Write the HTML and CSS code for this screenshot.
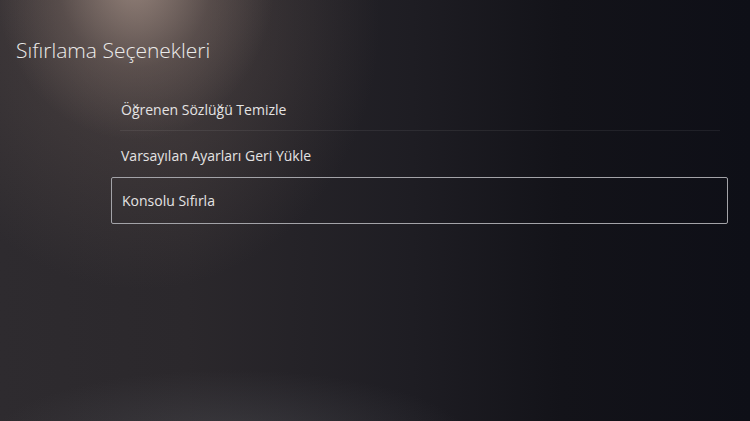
FILE: index.html
```html
<!DOCTYPE html>
<html lang="tr">
<head>
    <meta charset="UTF-8">
    <title>Sıfırlama Seçenekleri</title>
    <link rel="stylesheet" href="styles.css">
</head>
<body>
    <div class="screen">
        <h1 class="title">Sıfırlama Seçenekleri</h1>

        <ul class="menu">
            <li class="menu-item">Öğrenen Sözlüğü Temizle</li>
            <li class="menu-item">Varsayılan Ayarları Geri Yükle</li>
            <li class="menu-item focused">Konsolu Sıfırla</li>
        </ul>
    </div>
</body>
</html>
```

FILE: styles.css
```css
/* Settings screen, dark theme */
html, body { margin: 0; padding: 0; height: 100%; }
body { background: #111219; font-family: "Open Sans", "Noto Sans", sans-serif; color: #e6e4e4; overflow: hidden; }

.screen {
    width: 750px;
    height: 421px;
    box-sizing: border-box;
    padding: 35px 22px 0 16px;
    background:
        radial-gradient(ellipse 140px 160px at 135px -20px, rgba(165, 145, 135, 0.8), rgba(130, 112, 105, 0.35) 55%, rgba(90, 80, 80, 0) 100%),
        radial-gradient(ellipse 240px 270px at 140px 20px, rgba(100, 86, 82, 0.55), rgba(60, 55, 55, 0) 100%),
        radial-gradient(ellipse 240px 70px at 230px 440px, rgba(85, 86, 92, 0.4), rgba(60, 60, 66, 0) 100%),
        linear-gradient(90deg, #2e2b2f 0%, #2b282c 25%, #1e1d23 55%, #131319 75%, #0e0f17 100%);
}

.title {
    margin: 0 0 22px 0;
    font-size: 21px;
    font-weight: 300;
    line-height: 30px;
    color: #ecebea;
}

.menu { list-style: none; margin: 0 0 0 95px; padding: 0; }

.menu-item {
    height: 45px;
    line-height: 45px;
    padding: 0 10px;
    font-size: 14px;
    color: #e4e3e3;
    position: relative;
}

.menu-item:nth-child(2) { line-height: 48px; }

/* thin divider under the first entry */
.menu-item:first-child::after {
    content: "";
    position: absolute;
    left: 9px;
    right: 8px;
    bottom: 1px;
    height: 1px;
    background: rgba(255, 255, 255, 0.07);
}

.menu-item.focused {
    border: 1.5px solid #a3a3a8;
    border-radius: 2px;
    height: 45px;
    line-height: 46px;
}
```
